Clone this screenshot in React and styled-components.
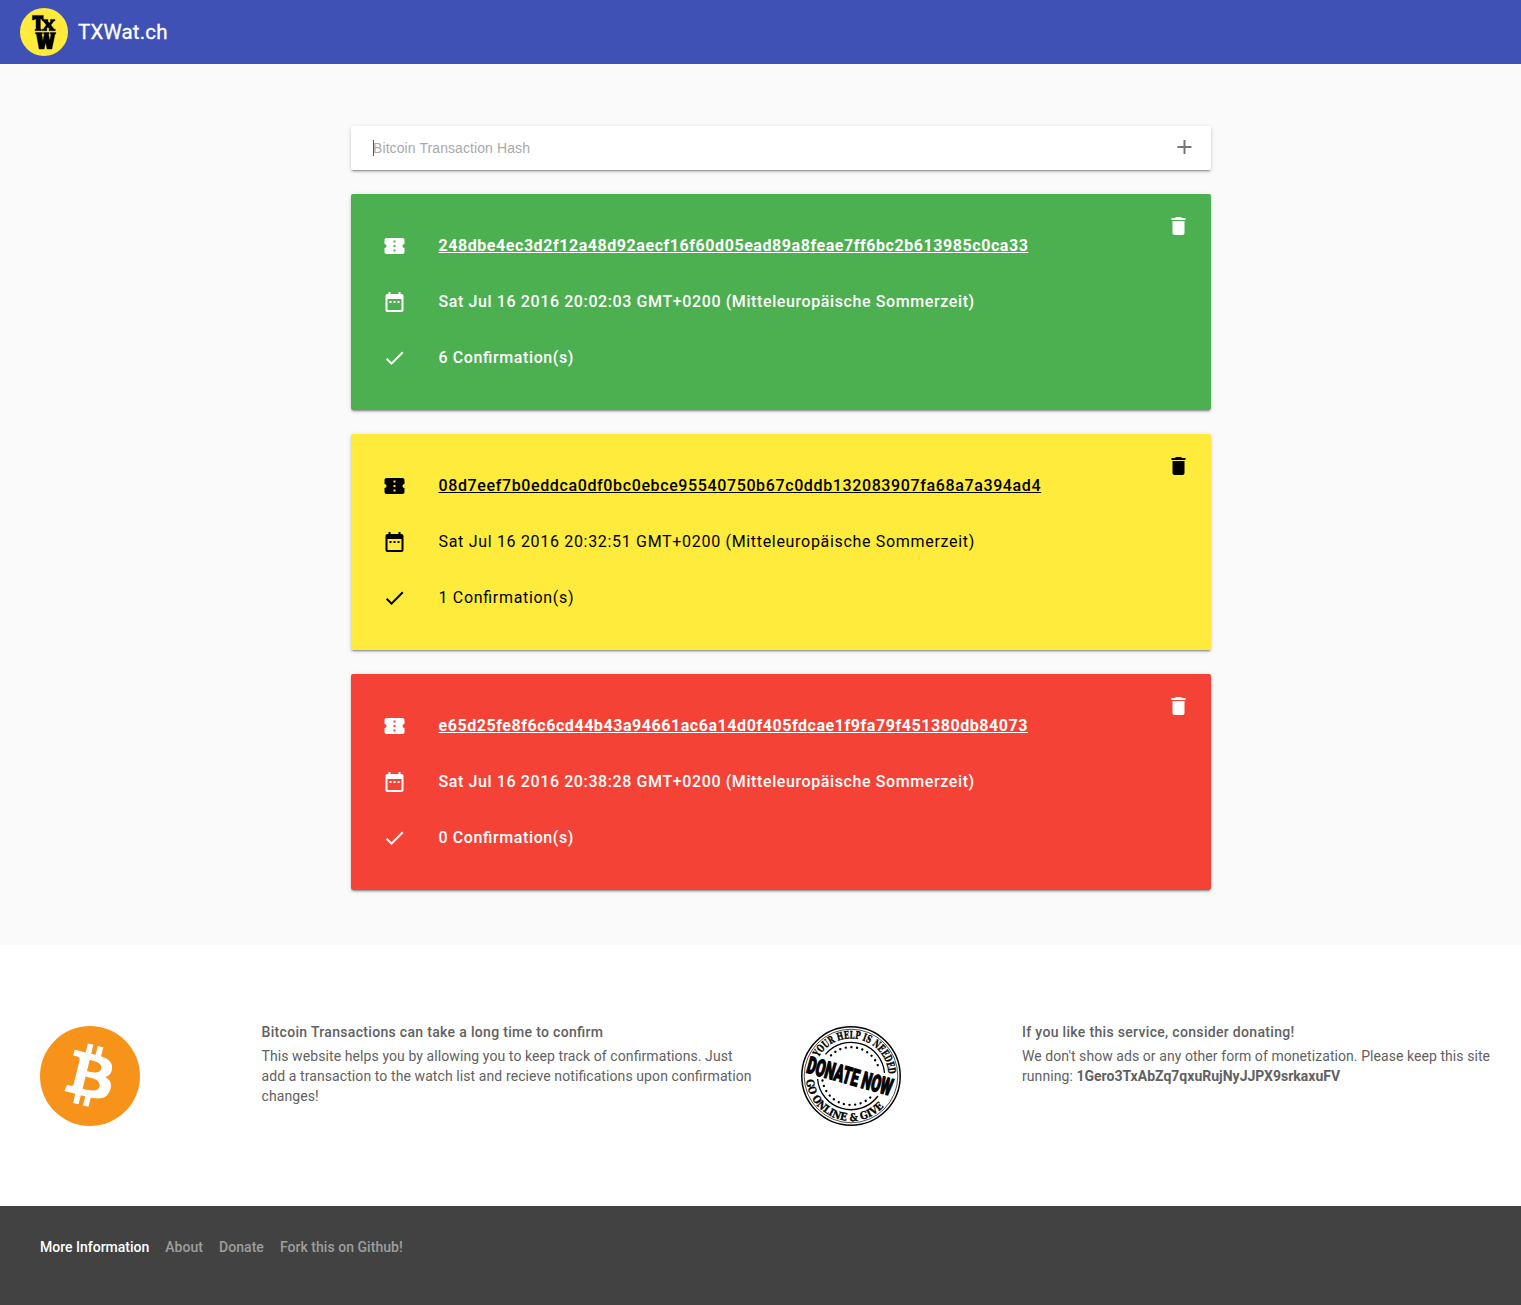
import React from "react";
import styled, { createGlobalStyle } from "styled-components";

const GlobalStyle = createGlobalStyle`
  *, *::before, *::after { box-sizing: border-box; }
  body {
    margin: 0;
    background: #fafafa;
    font-family: Roboto, "Liberation Sans", sans-serif;
    font-size: 14px;
    line-height: 20px;
    font-feature-settings: "liga" 1;
  }
`;

const Header = styled.header`
  display: flex;
  align-items: center;
  gap: 10px;
  height: 64px;
  padding: 0 20px;
  background: #3f51b5;
`;

const Title = styled.h1`
  margin: 0;
  color: #fff;
  font-size: 20.5px;
  font-weight: 400;
  line-height: 24px;
  letter-spacing: 0.18px;
  -webkit-text-stroke: 0.3px #fff;
`;

const Main = styled.main`
  display: flex;
  flex-direction: column;
  gap: 24px;
  width: 860px;
  height: 881px;
  margin-left: 351px;
  padding-top: 62px;
`;

const shadow = `
  0 2px 2px 0 rgba(0, 0, 0, 0.14),
  0 3px 1px -2px rgba(0, 0, 0, 0.2),
  0 1px 5px 0 rgba(0, 0, 0, 0.12)`;

const SearchBar = styled.form`
  display: flex;
  align-items: center;
  height: 44px;
  padding: 0 15px 0 22px;
  border-radius: 2px;
  background: #fff;
  box-shadow: ${shadow};
`;

const Caret = styled.span`
  width: 1px;
  height: 16px;
  margin-right: -1px;
  background: #555;
`;

const HashInput = styled.input`
  flex: 1;
  min-width: 0;
  padding: 0;
  border: 0;
  outline: 0;
  background: transparent;
  font-family: "Liberation Sans", Arial, sans-serif;
  font-size: 14px;
  letter-spacing: 0.09px;

  &::placeholder { color: #a9a9a9; opacity: 1; }
`;

const IconButton = styled.button`
  display: flex;
  padding: 0;
  border: 0;
  background: none;
  color: ${(p) => p.$color || "inherit"};
`;

const Card = styled.article`
  display: flex;
  justify-content: space-between;
  align-items: flex-start;
  height: 216px;
  padding: 20px 20px 24px 32px;
  border-radius: 2px;
  background: ${(p) => p.$bg};
  color: ${(p) => p.$fg};
  box-shadow: ${shadow};
`;

const Rows = styled.ul`
  display: flex;
  flex-direction: column;
  gap: 32px;
  margin: 0;
  padding: 20px 0 0;
  list-style: none;
`;

const Row = styled.li`
  display: flex;
  align-items: center;
  gap: 31.5px;
  height: 24px;
  font-size: 16px;
  line-height: 24px;
`;

const RowText = styled.span`
  font-weight: ${(p) => p.$weight};
  letter-spacing: ${(p) => p.$spacing}px;
`;

const HashLink = styled.a`
  color: inherit;
  font-weight: ${(p) => p.$weight};
  letter-spacing: ${(p) => p.$spacing}px;
`;

const InfoSection = styled.section`
  display: grid;
  grid-template-columns: 1fr 1fr;
  height: 261px;
  padding-top: 77px;
  background: #fff;
`;

const InfoBlock = styled.div`
  display: grid;
  grid-template-columns: 221.5px 1fr;
  align-items: start;
  padding: 0 8px 0 40px;
`;

const Picture = styled.div`
  display: flex;
  padding-top: 4px;
`;

const InfoText = styled.div`
  color: #616161;
`;

const InfoTitle = styled.h2`
  margin: 0;
  font-size: 14px;
  font-weight: 500;
  line-height: 20px;
  letter-spacing: 0.32px;
`;

const InfoBody = styled.p`
  margin: 4px 0 0;
  letter-spacing: ${(p) => p.$spacing}px;
`;

const Address = styled.strong`
  letter-spacing: 0.01px;
`;

const Footer = styled.footer`
  display: flex;
  gap: 16px;
  height: 99px;
  padding: 31px 40px;
  background: #424242;
`;

const FooterTitle = styled.span`
  color: #fff;
  font-weight: 500;
`;

const FooterLink = styled.a`
  color: #9e9e9e;
  font-weight: 500;
  letter-spacing: 0.04px;
`;

const icons = {
  ticket:
    "M22 10V6c0-1.11-.9-2-2-2H4c-1.1 0-1.99.89-1.99 2v4c1.1 0 1.99.9 1.99 2s-.89 2-2 2v4c0 1.1.9 2 2 2h16c1.1 0 2-.9 2-2v-4c-1.1 0-2-.9-2-2s.9-2 2-2zm-9 7.5h-2v-2h2v2zm0-4.5h-2v-2h2v2zm0-4.5h-2v-2h2v2z",
  date:
    "M9 11H7v2h2v-2zm4 0h-2v2h2v-2zm4 0h-2v2h2v-2zm2-7h-1V2h-2v2H8V2H6v2H5c-1.11 0-1.99.9-1.99 2L3 20c0 1.1.89 2 2 2h14c1.1 0 2-.9 2-2V6c0-1.1-.9-2-2-2zm0 16H5V9h14v11z",
  check: "M9 16.17L4.83 12l-1.42 1.41L9 19 21 7l-1.41-1.41z",
  add: "M19 13h-6v6h-2v-6H5v-2h6V5h2v6h6v2z",
  remove: "M6 19c0 1.1.9 2 2 2h8c1.1 0 2-.9 2-2V7H6v12zM19 4h-3.5l-1-1h-5l-1 1H5v2h14V4z",
};

const Icon = ({ name, dx = -0.5, dy = 0 }) => (
  <svg width="24" height="24" viewBox="0 0 24 24" fill="currentColor" aria-hidden="true">
    <path d={icons[name]} transform={`translate(${dx} ${dy})`} />
  </svg>
);

const Logo = () => (
  <svg width="48" height="48" viewBox="0 0 48 48">
    <circle cx="24" cy="24" r="24" fill="#ffeb3b" />
    <g stroke="#000" strokeWidth="0.4">
      <path d="M12.4 7.4H23.4V12H22L21.4 11H20.4V21.2H21.5V22.7H15V21.2H16V11H14.8L14 12H12.4Z" />
      <path d="M22.3 11.4H28V12.9H27.6L29.3 15L31 12.9H30.4V11.4H35V12.9H34L30.9 16.9L34.2 21.2H35.3V22.7H29V21.2H29.6L27.9 19L26.2 21.2H26.9V22.7H22.2V21.2H23.2L26.3 17L23.2 12.9H22.3Z" />
      <path d="M15.5 24.5H22.4V26H21.7L22.9 33L24.3 26H23.6V24.5H29.2V26H28.5L29.8 33L31 26H30.3V24.5H35.8V26H35L31.9 41.1H27L25.7 34.3L24.1 41.1H19.1L16.4 26H15.5Z" />
    </g>
  </svg>
);

const BitcoinLogo = () => (
  <svg width="100" height="100" viewBox="0 0 64 64">
    <circle cx="32" cy="32" r="32" fill="#f7931a" />
    <path
      fill="#fff"
      d="m46.103,27.444c0.637-4.258-2.605-6.547-7.038-8.074l1.438-5.768-3.511-0.875-1.4,5.616c-0.923-0.23-1.871-0.447-2.813-0.662l1.41-5.653-3.509-0.875-1.439,5.766c-0.764-0.174-1.514-0.346-2.242-0.527l0.004-0.018-4.842-1.209-0.934,3.75s2.605,0.597,2.55,0.634c1.422,0.355,1.679,1.296,1.636,2.042l-1.638,6.571c0.098,0.025,0.225,0.061,0.365,0.117-0.117-0.029-0.242-0.061-0.371-0.092l-2.296,9.205c-0.174,0.432-0.615,1.08-1.609,0.834,0.035,0.051-2.552-0.637-2.552-0.637l-1.743,4.019,4.569,1.139c0.85,0.213,1.683,0.436,2.503,0.646l-1.453,5.834,3.507,0.875,1.439-5.772c0.958,0.26,1.888,0.5,2.798,0.726l-1.434,5.745,3.511,0.875,1.453-5.823c5.987,1.133,10.489,0.676,12.384-4.739,1.527-4.36-0.076-6.875-3.226-8.515,2.294-0.529,4.022-2.038,4.483-5.155zm-8.022,11.249c-1.085,4.36-8.426,2.003-10.806,1.412l1.928-7.729c2.38,0.594,10.012,1.77,8.878,6.317zm1.086-11.312c-0.99,3.966-7.1,1.951-9.082,1.457l1.748-7.01c1.982,0.494,8.365,1.416,7.334,5.553z"
    />
  </svg>
);

const StampSvg = styled.svg`
  overflow: visible;
`;

const StampText = styled.text`
  font-family: "DejaVu Serif", "Liberation Serif", serif;
  font-weight: 700;
  font-size: 10.5px;
  stroke: #000;
  stroke-width: 0.35px;
`;

const StampBanner = styled.text`
  font-family: Roboto, sans-serif;
  font-weight: 900;
  font-size: 23.5px;
  stroke: #000;
  stroke-width: 1.2px;
`;

const DonateStamp = () => (
  <StampSvg width="100" height="100" viewBox="0 0 100 100">
    <defs>
      <path id="arc-top" d="M17.5 31.2A37.5 37.5 0 0 1 87.4 52" />
      <path id="arc-bottom" d="M5.2 54A45 45 0 0 0 82.9 80.7" />
    </defs>
    <g fill="none" stroke="#000">
      <circle cx="50" cy="50" r="49.2" strokeWidth="1.5" />
      <circle cx="50" cy="50" r="46.8" strokeWidth="0.7" />
      <path d="M24.5 28.3A33.5 33.5 0 0 1 83.5 47" strokeWidth="1.3" />
      <path d="M16.6 53A33.5 33.5 0 0 0 77 70" strokeWidth="1.3" />
      <path
        d="M30 29.3A28.8 28.8 0 0 1 78 43"
        strokeWidth="2.4"
        strokeLinecap="round"
        strokeDasharray="0.01 5.6"
      />
      <path
        d="M21.5 54.5A28.8 28.8 0 0 0 69.8 71"
        strokeWidth="2.4"
        strokeLinecap="round"
        strokeDasharray="0.01 5.6"
      />
    </g>
    <StampText>
      <textPath href="#arc-top" textLength="96" lengthAdjust="spacingAndGlyphs">
        YOUR HELP IS NEEDED
      </textPath>
    </StampText>
    <StampText>
      <textPath href="#arc-bottom" textLength="103" lengthAdjust="spacingAndGlyphs">
        GO ONLINE &amp; GIVE
      </textPath>
    </StampText>
    <g transform="translate(49 50) rotate(15.5)">
      <StampBanner x="-44" y="8.3" textLength="88" lengthAdjust="spacingAndGlyphs">
        DONATE NOW
      </StampBanner>
    </g>
  </StampSvg>
);

const transactions = [
  {
    hash: "248dbe4ec3d2f12a48d92aecf16f60d05ead89a8feae7ff6bc2b613985c0ca33",
    date: "Sat Jul 16 2016 20:02:03 GMT+0200 (Mitteleuropäische Sommerzeit)",
    confirmations: 6,
    bg: "#4caf50",
    fg: "#fff",
    text: { $weight: 500, $spacing: 0.605 },
    link: { $weight: 700, $spacing: 0.56 },
  },
  {
    hash: "08d7eef7b0eddca0df0bc0ebce95540750b67c0ddb132083907fa68a7a394ad4",
    date: "Sat Jul 16 2016 20:32:51 GMT+0200 (Mitteleuropäische Sommerzeit)",
    confirmations: 1,
    bg: "#ffeb3b",
    fg: "#000",
    text: { $weight: 400, $spacing: 0.685 },
    link: { $weight: 500, $spacing: 0.625 },
  },
  {
    hash: "e65d25fe8f6c6cd44b43a94661ac6a14d0f405fdcae1f9fa79f451380db84073",
    date: "Sat Jul 16 2016 20:38:28 GMT+0200 (Mitteleuropäische Sommerzeit)",
    confirmations: 0,
    bg: "#f44336",
    fg: "#fff",
    text: { $weight: 500, $spacing: 0.605 },
    link: { $weight: 700, $spacing: 0.56 },
  },
];

const TransactionCard = ({ tx }) => (
  <Card $bg={tx.bg} $fg={tx.fg}>
    <Rows>
      <Row>
        <Icon name="ticket" />
        <HashLink href="#" {...tx.link}>{tx.hash}</HashLink>
      </Row>
      <Row>
        <Icon name="date" />
        <RowText {...tx.text}>{tx.date}</RowText>
      </Row>
      <Row>
        <Icon name="check" />
        <RowText {...tx.text}>{`${tx.confirmations} Confirmation(s)`}</RowText>
      </Row>
    </Rows>
    <IconButton type="button" aria-label="Delete">
      <Icon name="remove" />
    </IconButton>
  </Card>
);

export default function App() {
  return (
    <>
      <GlobalStyle />
      <Header>
        <Logo />
        <Title>TXWat.ch</Title>
      </Header>
      <Main>
        <SearchBar>
          <Caret />
          <HashInput placeholder="Bitcoin Transaction Hash" />
          <IconButton type="button" aria-label="Add" $color="#757575">
            <Icon name="add" dx={0.5} dy={-1} />
          </IconButton>
        </SearchBar>
        {transactions.map((tx) => (
          <TransactionCard key={tx.hash} tx={tx} />
        ))}
      </Main>
      <InfoSection>
        <InfoBlock>
          <Picture>
            <BitcoinLogo />
          </Picture>
          <InfoText>
            <InfoTitle>Bitcoin Transactions can take a long time to confirm</InfoTitle>
            <InfoBody $spacing={0.09}>
              This website helps you by allowing you to keep track of confirmations. Just add a
              transaction to the watch list and recieve notifications upon confirmation changes!
            </InfoBody>
          </InfoText>
        </InfoBlock>
        <InfoBlock>
          <Picture>
            <DonateStamp />
          </Picture>
          <InfoText>
            <InfoTitle>If you like this service, consider donating!</InfoTitle>
            <InfoBody $spacing={0.065}>
              We don't show ads or any other form of monetization. Please keep this site running:{" "}
              <Address>1Gero3TxAbZq7qxuRujNyJJPX9srkaxuFV</Address>
            </InfoBody>
          </InfoText>
        </InfoBlock>
      </InfoSection>
      <Footer>
        <FooterTitle>More Information</FooterTitle>
        <FooterLink>About</FooterLink>
        <FooterLink>Donate</FooterLink>
        <FooterLink>Fork this on Github!</FooterLink>
      </Footer>
    </>
  );
}
